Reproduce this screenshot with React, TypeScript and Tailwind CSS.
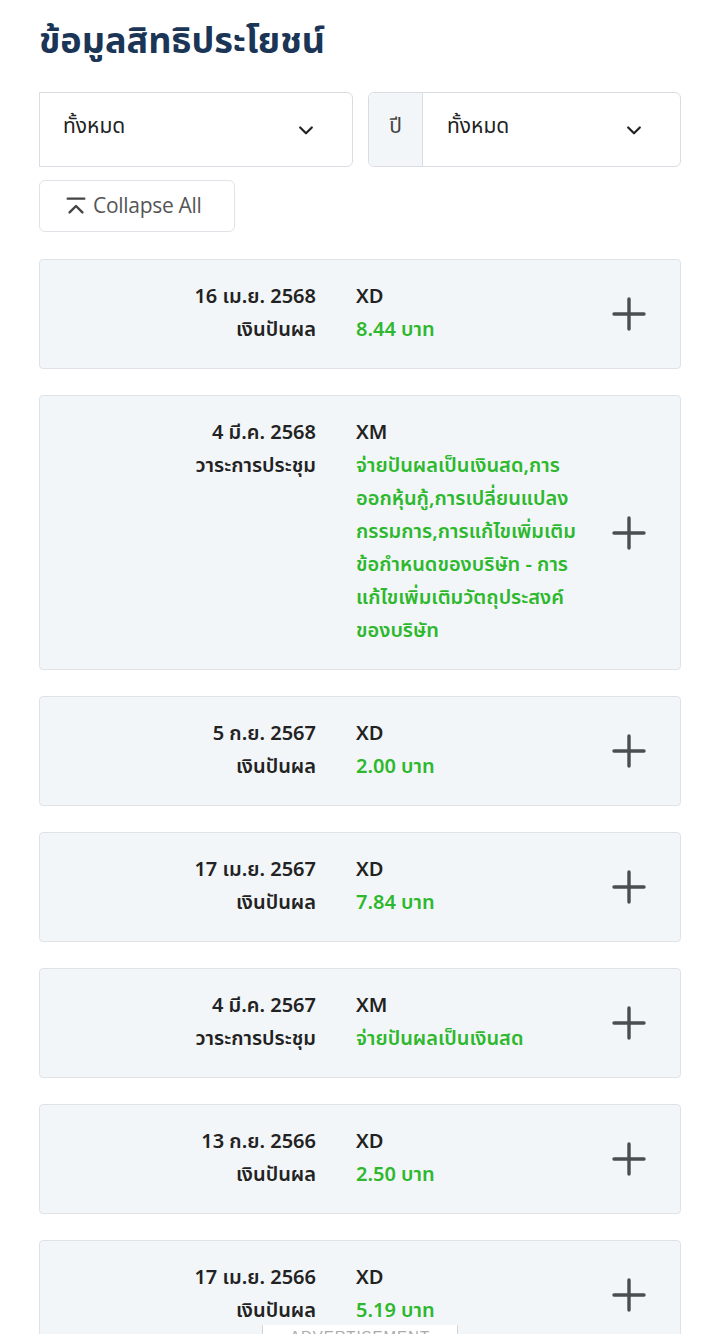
import React from "react";

type Item = { date: string; type: string; label: string; value: string };

const items: Item[] = [
  { date: "16 เม.ย. 2568", type: "XD", label: "เงินปันผล", value: "8.44 บาท" },
  {
    date: "4 มี.ค. 2568",
    type: "XM",
    label: "วาระการประชุม",
    value:
      "จ่ายปันผลเป็นเงินสด,การออกหุ้นกู้,การเปลี่ยนแปลงกรรมการ,การแก้ไขเพิ่มเติมข้อกำหนดของบริษัท - การแก้ไขเพิ่มเติมวัตถุประสงค์ของบริษัท",
  },
  { date: "5 ก.ย. 2567", type: "XD", label: "เงินปันผล", value: "2.00 บาท" },
  { date: "17 เม.ย. 2567", type: "XD", label: "เงินปันผล", value: "7.84 บาท" },
  { date: "4 มี.ค. 2567", type: "XM", label: "วาระการประชุม", value: "จ่ายปันผลเป็นเงินสด" },
  { date: "13 ก.ย. 2566", type: "XD", label: "เงินปันผล", value: "2.50 บาท" },
  { date: "17 เม.ย. 2566", type: "XD", label: "เงินปันผล", value: "5.19 บาท" },
];

const font = { fontFamily: '"Noto Sans Thai", "Noto Sans", Roboto, sans-serif' };

function Chevron() {
  return (
    <svg width="20" height="20" viewBox="0 0 24 24" fill="none" stroke="#222" strokeWidth="2.6" strokeLinecap="round" strokeLinejoin="round">
      <path d="M5 9l7 7 7-7" />
    </svg>
  );
}

function Plus() {
  return (
    <svg width="36" height="36" viewBox="0 0 36 36" fill="none" stroke="#4a4d52" strokeWidth="3.4" strokeLinecap="round">
      <path d="M18 3v30M3 18h30" />
    </svg>
  );
}

export default function App() {
  return (
    <div className="relative h-[1334px] overflow-hidden bg-white" style={font}>
      <div className="px-[39px] pt-[16px]">
        <h1 className="text-[36px] font-bold leading-[52px] text-[#1b3556]">ข้อมูลสิทธิประโยชน์</h1>
        <div className="mt-[24px] flex gap-[15px]">
          <div className="flex h-[75px] w-[314px] items-center justify-between rounded-r-md border border-[#d9dde1] bg-white pl-[23px] pr-[36px]">
            <span className="text-[21px] text-[#222] -mt-[6px]">ทั้งหมด</span>
            <Chevron />
          </div>
          <div className="flex h-[75px] flex-1 rounded-md border border-[#d9dde1] bg-white">
            <div className="flex w-[54px] items-center justify-center rounded-l-md border-r border-[#d9dde1] bg-[#f3f6f9] text-[21px] text-[#444]">
              <span className="-mt-[6px]">ปี</span>
            </div>
            <div className="flex flex-1 items-center justify-between pl-[24px] pr-[36px]">
              <span className="text-[21px] text-[#222] -mt-[6px]">ทั้งหมด</span>
              <Chevron />
            </div>
          </div>
        </div>
        <div className="mt-[13px] flex">
          <div className="flex h-[52px] w-[196px] items-center gap-[6px] rounded-md border border-[#dfe2e6] bg-white pl-[25px]">
            <svg width="22" height="22" viewBox="0 0 24 24" fill="none" stroke="#444" strokeWidth="2.6" strokeLinecap="round" strokeLinejoin="round">
              <path d="M3 4h18M5 19l7-7 7 7" />
            </svg>
            <span className="text-[21px] text-[#555]" style={{ fontFamily: '"Open Sans", "Noto Sans", sans-serif', letterSpacing: "-0.3px" }}>
              Collapse All
            </span>
          </div>
        </div>
        <div className="mt-[27px] flex flex-col gap-[26px]">
          {items.map((it, i) => (
            <div key={i} className="flex items-start rounded-[4px] border border-[#dfe3e7] bg-[#f3f6f9] py-[21px]">
              <div className="w-[276px] shrink-0 text-right text-[20px] font-semibold leading-[33px] text-[#222]">
                <div>{it.date}</div>
                <div>{it.label}</div>
              </div>
              <div className="ml-[40px] w-[238px] shrink-0 text-[20px] font-semibold leading-[33px]">
                <div className="text-[#222]">{it.type}</div>
                <div className="text-[#2db82d]">{it.value}</div>
              </div>
              <div className="flex flex-1 justify-end self-center pr-[33px]">
                <Plus />
              </div>
            </div>
          ))}
        </div>
      </div>
      <div className="absolute left-[262px] top-[1325px] h-[40px] w-[196px] border-x border-[#d5d5d5] bg-white text-center text-[15px] leading-[15px] tracking-[1px] text-[#aaa]" style={{ fontFamily: '"Liberation Sans", sans-serif' }}>
        <div className="pt-[3px]">ADVERTISEMENT</div>
      </div>
    </div>
  );
}
